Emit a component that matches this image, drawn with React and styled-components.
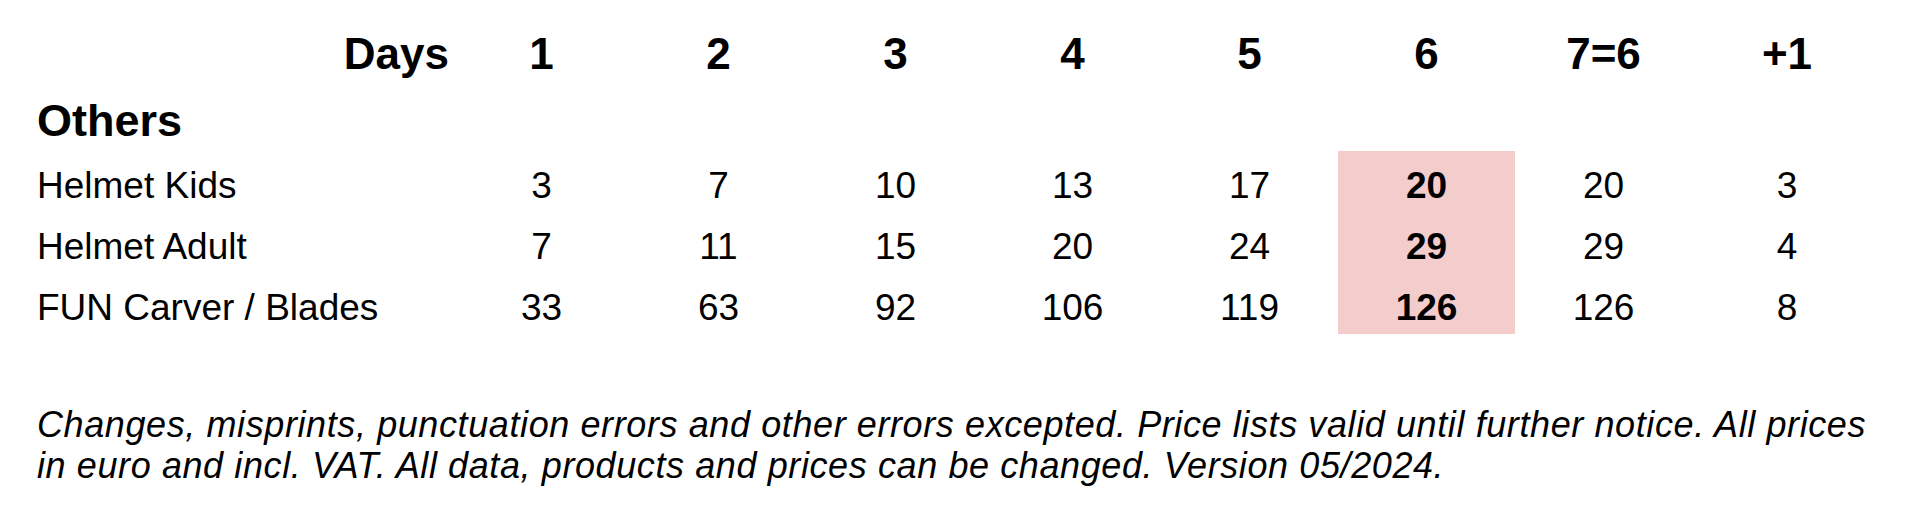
import React from 'react';
import styled, { createGlobalStyle } from 'styled-components';

const GlobalStyle = createGlobalStyle`
  html, body {
    margin: 0;
    padding: 0;
    background: #fff;
  }
  body {
    font-family: "Liberation Sans", Arial, sans-serif;
    color: #000;
  }
`;

const days = ['1', '2', '3', '4', '5', '6', '7=6', '+1'];
const items = [
  { name: 'Helmet Kids', prices: [3, 7, 10, 13, 17, 20, 20, 3] },
  { name: 'Helmet Adult', prices: [7, 11, 15, 20, 24, 29, 29, 4] },
  { name: 'FUN Carver / Blades', prices: [33, 63, 92, 106, 119, 126, 126, 8] },
];
const HIGHLIGHT = 5;

const App = () => {
  return (
    <Page>
      <GlobalStyle />
      <Table>
        <HeaderRow>
          <DaysLabel>Days</DaysLabel>
          {days.map((d) => (
            <HeadCell key={d}>{d}</HeadCell>
          ))}
        </HeaderRow>
        <Section>Others</Section>
        {items.map((item) => (
          <Row key={item.name}>
            <Name>{item.name}</Name>
            {item.prices.map((p, i) => (
              <Cell key={i} $hl={i === HIGHLIGHT}>
                {p}
              </Cell>
            ))}
          </Row>
        ))}
      </Table>
      <Note>
        Changes, misprints, punctuation errors and other errors excepted. Price lists valid until further notice. All prices
        in euro and incl. VAT. All data, products and prices can be changed. Version 05/2024.
      </Note>
    </Page>
  );
};

export default App;

const Page = styled.div`
  width: 1912px;
  height: 513px;
  padding-top: 30px;
  box-sizing: border-box;
  overflow: hidden;
`;

const Table = styled.div`
  display: flex;
  flex-direction: column;
`;

const grid = `
  display: grid;
  grid-template-columns: 453px repeat(7, 177px) 190px;
`;

const HeaderRow = styled.div`
  ${grid}
  height: 48px;
  align-items: center;
  font-weight: bold;
  font-size: 44px;
  line-height: 48px;
`;

const DaysLabel = styled.div`
  text-align: right;
  padding-right: 4px;
`;

const HeadCell = styled.div`
  text-align: center;
`;

const Section = styled.div`
  margin-top: 19px;
  padding-left: 37px;
  font-weight: bold;
  font-size: 45px;
  line-height: 48px;
  height: 54px;
`;

const Row = styled.div`
  ${grid}
  height: 61px;
  font-size: 37px;
`;

const Name = styled.div`
  padding-left: 37px;
  padding-top: 9px;
  box-sizing: border-box;
  display: flex;
  align-items: center;
  white-space: nowrap;
`;

const Cell = styled.div`
  display: flex;
  align-items: center;
  justify-content: center;
  padding-top: 9px;
  box-sizing: border-box;
  background: ${(p) => (p.$hl ? '#f3cccc' : 'transparent')};
  font-weight: ${(p) => (p.$hl ? 'bold' : 'normal')};
`;

const Note = styled.p`
  margin: 70px 0 0 37px;
  width: 1860px;
  font-style: italic;
  font-size: 36px;
  letter-spacing: 0.6px;
  line-height: 41px;
`;
